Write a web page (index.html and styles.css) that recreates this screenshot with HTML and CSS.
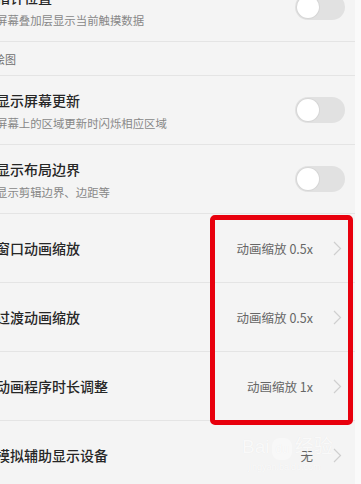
FILE: index.html
```html
<!DOCTYPE html>
<html lang="zh-CN">
<head>
<meta charset="utf-8">
<link rel="stylesheet" href="styles.css">
</head>
<body>
<div class="screen">
  <div class="list">
    <div class="row">
      <div class="text">
        <div class="title">指针位置</div>
        <div class="sub">屏幕叠加层显示当前触摸数据</div>
      </div>
      <div class="switch"><span class="knob"></span></div>
    </div>
    <div class="header">绘图</div>
    <div class="row">
      <div class="text">
        <div class="title">显示屏幕更新</div>
        <div class="sub">屏幕上的区域更新时闪烁相应区域</div>
      </div>
      <div class="switch"><span class="knob"></span></div>
    </div>
    <div class="row">
      <div class="text">
        <div class="title">显示布局边界</div>
        <div class="sub">显示剪辑边界、边距等</div>
      </div>
      <div class="switch"><span class="knob"></span></div>
    </div>
    <div class="row nav">
      <div class="title">窗口动画缩放</div>
      <div class="value">动画缩放 0.5x</div>
      <svg class="chev" width="9" height="15" viewBox="0 0 9 15"><path d="M1 1 L7.5 7.5 L1 14" fill="none" stroke="#cfcfcf" stroke-width="1.2"/></svg>
    </div>
    <div class="row nav">
      <div class="title">过渡动画缩放</div>
      <div class="value">动画缩放 0.5x</div>
      <svg class="chev" width="9" height="15" viewBox="0 0 9 15"><path d="M1 1 L7.5 7.5 L1 14" fill="none" stroke="#cfcfcf" stroke-width="1.2"/></svg>
    </div>
    <div class="row nav">
      <div class="title">动画程序时长调整</div>
      <div class="value">动画缩放 1x</div>
      <svg class="chev" width="9" height="15" viewBox="0 0 9 15"><path d="M1 1 L7.5 7.5 L1 14" fill="none" stroke="#cfcfcf" stroke-width="1.2"/></svg>
    </div>
    <div class="row nav">
      <div class="title">模拟辅助显示设备</div>
      <div class="value">无</div>
      <svg class="chev" width="9" height="15" viewBox="0 0 9 15"><path d="M1 1 L7.5 7.5 L1 14" fill="none" stroke="#cfcfcf" stroke-width="1.2"/></svg>
    </div>
  </div>
  <div class="highlight"></div>
  <div class="watermark">
    <div class="wm-main">Bai<span class="wm-du">du</span>经验</div>
    <div class="wm-url">jingyan.baidu.com</div>
  </div>
</div>
</body>
</html>
```

FILE: styles.css
```css
html, body {
  margin: 0;
  padding: 0;
}
body {
  width: 361px;
  height: 484px;
  overflow: hidden;
  background: #fafafa;
  font-family: "Noto Sans CJK SC", "Noto Sans", sans-serif;
}
.screen {
  position: relative;
  width: 355px;
  height: 484px;
  overflow: hidden;
  background: #f4f4f4;
}
.list {
  margin-top: -27px;
  display: flex;
  flex-direction: column;
}
.row {
  height: 68px;
  border-bottom: 1px solid #e4e4e4;
  display: flex;
  align-items: center;
  padding: 0 10px 0 0;
  margin-left: -4px;
}
.text {
  flex: 1;
  display: flex;
  flex-direction: column;
}
.title {
  font-size: 14px;
  line-height: 20px;
  color: #262626;
  font-weight: 500;
  flex: 1;
  white-space: nowrap;
}
.sub {
  font-size: 11.4px;
  line-height: 14px;
  color: #878787;
  margin-top: 6px;
  white-space: nowrap;
}
.switch {
  width: 50px;
  height: 26px;
  border-radius: 13px;
  background: #e1e1e1;
  display: flex;
  align-items: center;
  padding-left: 2px;
  box-sizing: border-box;
}
.knob {
  width: 22px;
  height: 22px;
  border-radius: 50%;
  background: #ffffff;
  box-shadow: 0 0 0 1px #d6d6d6;
}
.header {
  height: 33px;
  border-bottom: 1px solid #e4e4e4;
  margin-left: -6px;
  display: flex;
  align-items: center;
  font-size: 11px;
  color: #6f6f6f;
}
.nav {
  padding-right: 13px;
}
.value {
  font-size: 12.5px;
  color: #666;
  margin-right: 20px;
  white-space: nowrap;
}
.chev {
  display: block;
}
.highlight {
  position: absolute;
  left: 210px;
  top: 215px;
  width: 143px;
  height: 210px;
  box-sizing: border-box;
  border: 5px solid #e8000d;
  border-radius: 5px;
}
.watermark {
  position: absolute;
  left: 242px;
  top: 436px;
  color: rgba(255, 255, 255, 0.75);
  font-family: "Liberation Sans", "Noto Sans CJK SC", sans-serif;
  text-shadow: 0 0 1px rgba(0, 0, 0, 0.06);
}
.wm-main {
  font-size: 19px;
  line-height: 22px;
}
.wm-du {
  display: inline-block;
  font-size: 12px;
  margin: 0 3px;
  padding: 0 3px;
  border-radius: 8px;
  background: rgba(255, 255, 255, 0.4);
}
.wm-url {
  font-size: 9px;
  margin-top: 2px;
  padding-left: 6px;
}
```
